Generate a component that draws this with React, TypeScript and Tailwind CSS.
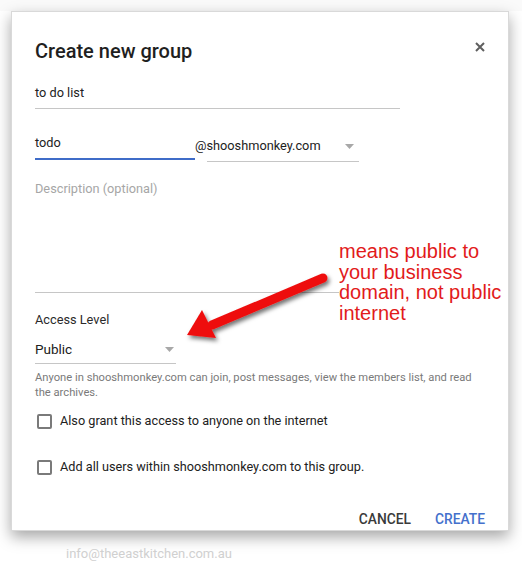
import { useState } from "react";

function Caret({ className }: { className?: string }) {
  return (
    <svg width="9" height="5" viewBox="0 0 9 5" className={className}>
      <path d="M0 0h9L4.5 5z" fill="#a8a8a8" />
    </svg>
  );
}

function Check({ label }: { label: string }) {
  const [on, setOn] = useState(false);
  return (
    <label className="flex items-center h-[16px] cursor-pointer">
      <input
        type="checkbox"
        checked={on}
        onChange={() => setOn(!on)}
        className="appearance-none ml-[2px] w-[15px] h-[15px] border-2 border-[#7a7a7a] rounded-[2px] checked:bg-[#4470cc] checked:border-[#4470cc]"
      />
      <span className="ml-[8px] text-[12.7px] leading-[16px] text-[#212121]">{label}</span>
    </label>
  );
}

export default function App() {
  return (
    <div
      className="relative w-[522px] h-[564px] bg-white overflow-hidden"
      style={{ fontFamily: "Roboto, 'Liberation Sans', sans-serif" }}
    >
      <div className="h-[11px] bg-[#fafafa]" />

      {/* dialog */}
      <div className="ml-[11px] w-[498px] h-[520px] bg-white border border-[#d9d9d9] shadow-[0_6px_14px_rgba(0,0,0,0.35)] pl-[23px] pr-[22px] pt-[27px]">
        <div className="flex items-start justify-between h-[24px]">
          <h1 className="text-[20px] leading-[24px] font-medium text-[#1f1f1f]">Create new group</h1>
          <button className="mt-[3px] mr-[1px] text-[#5f5f5f]">
            <svg width="10" height="10" viewBox="0 0 10 10">
              <path d="M1 1l8 8M9 1L1 9" stroke="#5f5f5f" strokeWidth="2" />
            </svg>
          </button>
        </div>

        <div className="mt-[22px] w-[365px] border-b border-[#c6c6c6] pb-[7px] text-[12.75px] leading-[16px] text-[#212121]">
          to do list
        </div>

        <div className="mt-[26px] flex items-start">
          <div className="w-[160px] border-b-2 border-[#3f6cc8] pb-[7px] text-[12.75px] leading-[16px] text-[#212121]">
            todo
          </div>
          <div className="ml-[12px] w-[152px] h-[27px] border-b border-[#c6c6c6] flex items-start justify-between pt-[3px]">
            <span className="-ml-[12px] text-[12.75px] leading-[16px] text-[#212121]">@shooshmonkey.com</span>
            <Caret className="mt-[6px] mr-[5px]" />
          </div>
        </div>

        <div className="mt-[19px] w-[365px] h-[112px] border-b border-[#c6c6c6] text-[12.75px] leading-[16px] text-[#a6a6a6]">
          Description (optional)
        </div>

        <div className="mt-[19px] text-[12.75px] leading-[16px] text-[#2a2a2a]">Access Level</div>

        <div className="mt-[13px] w-[141px] h-[23px] border-b border-[#c6c6c6] flex items-start justify-between">
          <span className="text-[13.5px] leading-[16px] text-[#212121]">Public</span>
          <Caret className="mt-[6px] mr-[2px]" />
        </div>

        <p className="mt-[6px] text-[11.2px] leading-[15px] text-[#7a7a7a]">
          Anyone in shooshmonkey.com can join, post messages, view the members list, and read
          <br />
          the archives.
        </p>

        <div className="mt-[13px]">
          <Check label="Also grant this access to anyone on the internet" />
        </div>
        <div className="mt-[30px]">
          <Check label="Add all users within shooshmonkey.com to this group." />
        </div>

        <div className="mt-[36px] flex justify-end gap-[24px] pr-[1px] text-[13.8px] leading-[16px] font-medium">
          <button className="text-[#3a3a3a]">CANCEL</button>
          <button className="text-[#4470cc]">CREATE</button>
        </div>
      </div>

      <div className="mt-[15px] ml-[66px] text-[13px] leading-[16px] text-[#d0d0d0]">info@theeastkitchen.com.au</div>

      {/* annotation */}
      <div
        className="absolute left-[339px] top-[241px] bg-white text-[20px] leading-[20.5px] text-[#e21b1b]"
        style={{ fontFamily: "'Liberation Sans', Arial, sans-serif" }}
      >
        means public to
        <br />
        your business
        <br />
        domain, not public
        <br />
        internet
      </div>
      <svg className="absolute left-[180px] top-[265px]" width="160" height="85" viewBox="0 0 160 85">
        <defs>
          <filter id="sh" x="-20%" y="-20%" width="150%" height="160%">
            <feDropShadow dx="2" dy="3" stdDeviation="2" floodColor="#000" floodOpacity="0.55" />
          </filter>
        </defs>
        <g filter="url(#sh)">
          <line x1="143" y1="13" x2="32" y2="60" stroke="#ee1111" strokeWidth="9" strokeLinecap="round" />
          <path d="M7 70 L22 45 L36 73 Z" fill="#ee1111" />
        </g>
      </svg>
    </div>
  );
}
